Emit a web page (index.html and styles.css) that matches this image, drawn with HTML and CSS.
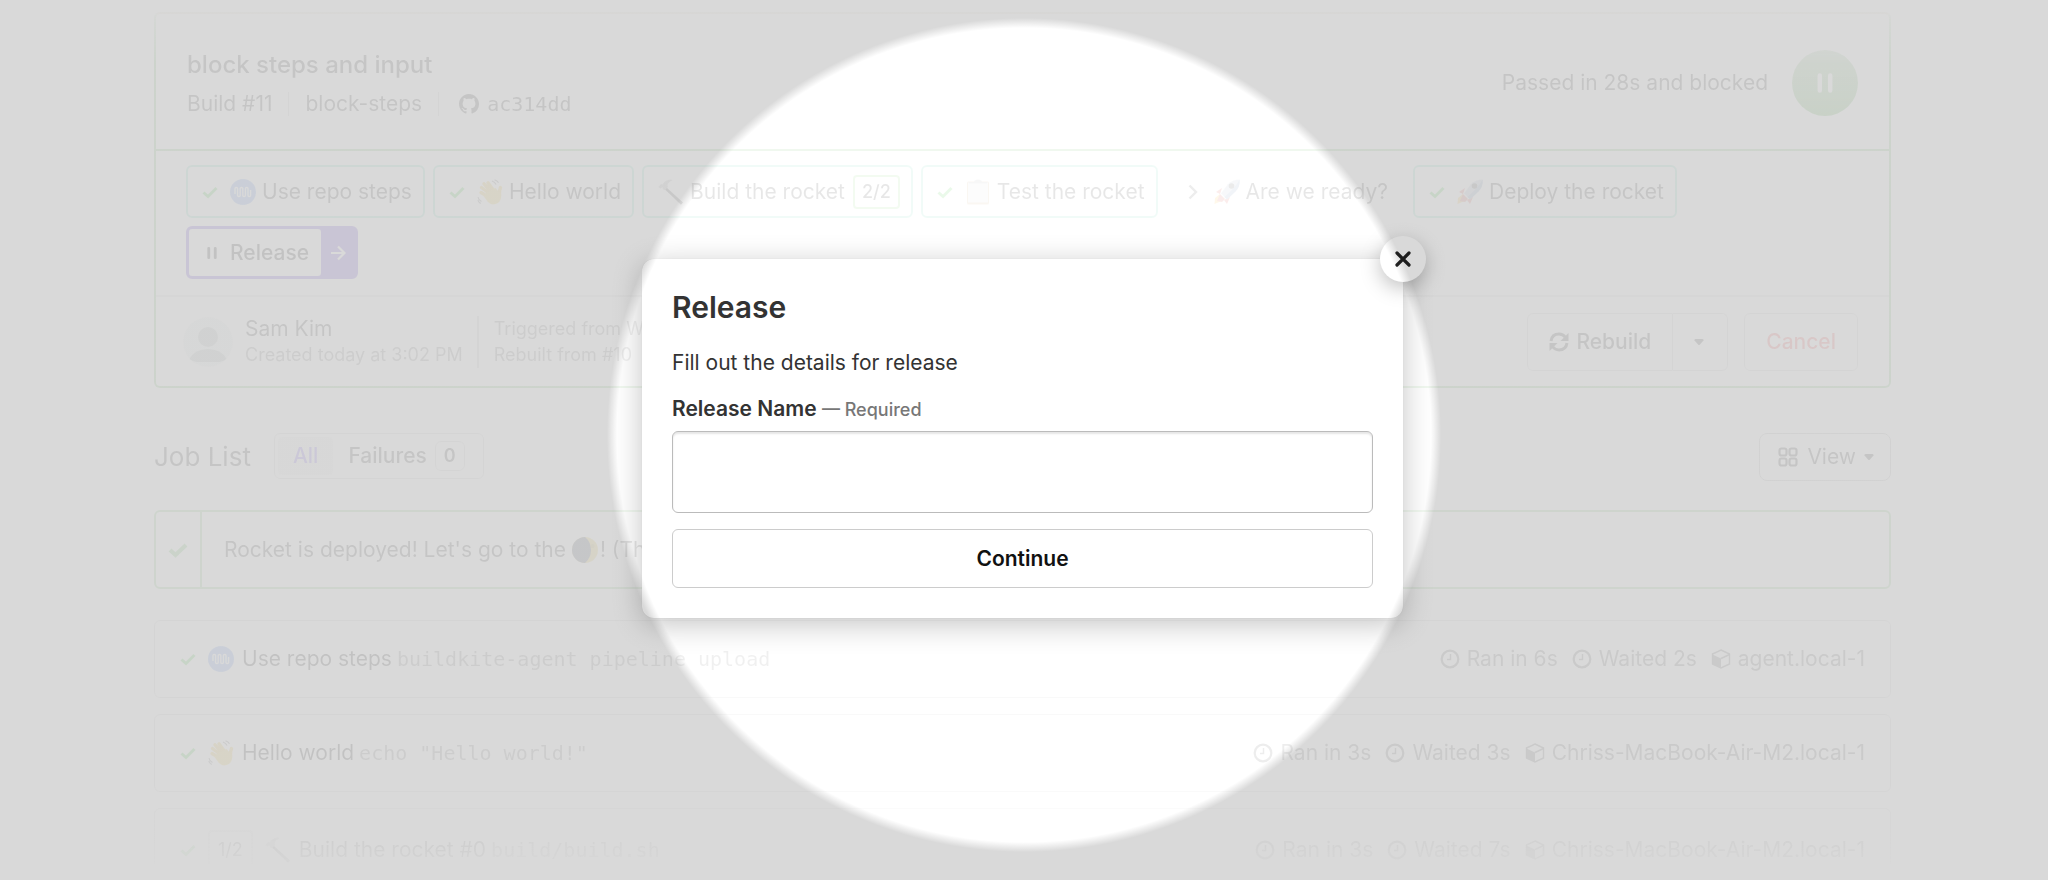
FILE: index.html
```html
<!DOCTYPE html>
<html lang="en">
<head>
<meta charset="utf-8">
<title>block steps and input – Build #11</title>
<link rel="stylesheet" href="styles.css">
</head>
<body>
<svg class="sprite" aria-hidden="true">
  <symbol id="check" viewBox="0 0 16 16"><path d="M1.500 8.500l4.500 4L14.500 4" fill="none" stroke="currentColor" stroke-width="3"/></symbol>
  <symbol id="logo" viewBox="0 0 26 26"><circle cx="13" cy="13" r="13" fill="#5a8cf0"/><path d="M5 15V9.500q0-1 1.300-1t1.300 1v7q0 1 1.300 1t1.300-1v-7q0-1 1.300-1t1.300 1v7q0 1 1.300 1t1.300-1v-7q0-1 1.300-1t1.300 1v7q0 1 1.300 1t1.300-1V11" fill="none" stroke="#fff" stroke-width="1.400"/></symbol>
  <symbol id="wave" viewBox="0 0 26 26"><g fill="none" stroke="#efbe30" stroke-linecap="round" stroke-width="3.400"><path d="M13 15L4.500 8.500M14.500 13L7 4.800M17 12L11 3.800M11.500 18L4 13.500"/><path d="M22.500 16q-.5-4 1-7.500"/></g><path d="M9.500 13.500L18.500 9l5.700 6.500q.5 5-3.200 8.500-6 3.500-10.500-1.500L6.500 17z" fill="#f5c93a"/><path d="M15 2q3 1 4 3.500M17.500.8q3 1 4 3M1 18q.5 3 3.500 4.500M.8 21q1 2.500 3 3.500" fill="none" stroke="#666" stroke-width="1.100"/></symbol>
  <symbol id="hammer" viewBox="0 0 26 26"><path d="M8.500 8.500L25 23.500l-2 2.200L7 10.500z" fill="#444"/><path d="M.5 8L3 5l1.500.5Q7 1 13 .5l1.500 1Q10 3 9.500 6l.5 2-3 3-2-.5-.5-2.500-2 1.500z" fill="#aaa"/></symbol>
  <symbol id="clip" viewBox="0 0 26 26"><rect x="2" y="2.500" width="22" height="23" rx="1.500" fill="#d9b48c"/><rect x="3" y="3.500" width="20" height="20" fill="#e4e4e8"/><path d="M4 4.500V3h5q0-2.500 4-2.500T17 3h5v1.500z" fill="#bbb"/></symbol>
  <symbol id="rocket" viewBox="0 0 26 26"><path d="M6 15L1 19l-.5 6 7-3z" fill="#ffc540"/><path d="M8 9l-6 4 4 2zM16 18l-3 7-3-4z" fill="#e2564b"/><path d="M6 15l5 5-3 3-5-1z" fill="#e2564b"/><path d="M25.500.5q1 7-4 12l-8.500 8-6-6 6.500-9q5-5 12-5z" fill="#b9c6d8"/><path d="M25.500.5q-3 7-15 17.500l2.500 2.500 8.500-8q5-5 4-12z" fill="#7f98c5"/><circle cx="17.500" cy="7" r="2.800" fill="#444"/></symbol>
  <symbol id="moon" viewBox="0 0 26 26"><circle cx="13" cy="13" r="13" fill="#e0c040"/><path d="M13 0a13 13 0 1 0 0 26q6-5 6-13t-6-13z" fill="#2b3345"/><circle cx="20.500" cy="9" r="2" fill="#b89a20"/></symbol>
  <symbol id="clock" viewBox="0 0 20 20"><circle cx="10" cy="10" r="8.300" fill="none" stroke="currentColor" stroke-width="2.200"/><path d="M10.500 5v5.500H7" fill="none" stroke="currentColor" stroke-width="1.500"/></symbol>
  <symbol id="cube" viewBox="0 0 20 20"><path d="M10 1l8.500 4v10L10 19 1.500 15V5z" fill="none" stroke="currentColor" stroke-width="1.500"/><path d="M1.500 5.500L10 9.500V19L1.500 15z" fill="currentColor"/><path d="M10 9.500l8.500-4" stroke="currentColor" stroke-width="1.500"/></symbol>
  <symbol id="caret" viewBox="0 0 10 8"><path d="M1.500 1h7Q10 1 9.500 2.500L6 6.500q-1 1-2 0L.5 2.500Q0 1 1.500 1z" fill="currentColor"/></symbol>
  <symbol id="pause" viewBox="0 0 16 20"><path d="M2.800 2.500v15M13.200 2.500v15" stroke="currentColor" stroke-width="4.500" stroke-linecap="round"/></symbol>
</svg>

<main class="page">
  <section class="build">
    <header class="build-head">
      <div>
        <h1 class="build-title">block steps and input</h1>
        <div class="meta">
          <span>Build #11</span><span>block-steps</span>
          <a class="commit" href="#commit"><svg class="icon" viewBox="0 0 16 16"><path fill="currentColor" d="M8 0C3.580 0 0 3.580 0 8c0 3.540 2.290 6.530 5.470 7.590.4.070.55-.17.55-.38 0-.19-.01-.82-.01-1.490-2.010.37-2.530-.49-2.690-.94-.09-.23-.48-.94-.82-1.130-.28-.15-.68-.52-.01-.53.63-.01 1.080.58 1.230.82.72 1.210 1.870.87 2.330.66.070-.52.28-.87.51-1.070-1.780-.2-3.640-.89-3.640-3.950 0-.87.31-1.590.82-2.150-.08-.2-.36-1.020.080-2.120 0 0 .67-.21 2.200.82.64-.18 1.320-.27 2-.27s1.360.090 2 .27c1.530-1.040 2.200-.82 2.200-.82.44 1.100.16 1.920.080 2.120.51.56.82 1.270.82 2.150 0 3.070-1.870 3.750-3.650 3.950.29.25.54.73.54 1.480 0 1.070-.01 1.930-.01 2.200 0 .21.15.46.55.38A8.010 8.010 0 0 0 16 8c0-4.420-3.580-8-8-8z"/></svg><code>ac314dd</code></a>
        </div>
      </div>
      <div class="status"><span>Passed in 28s and blocked</span><span class="status-dot"><svg width="16" height="20"><use href="#pause"/></svg></span></div>
    </header>

    <div class="steps">
      <a class="step" href="#s1"><svg class="tick"><use href="#check"/></svg><svg class="emoji"><use href="#logo"/></svg>Use repo steps</a>
      <a class="step" href="#s2"><svg class="tick"><use href="#check"/></svg><svg class="emoji"><use href="#wave"/></svg>Hello world</a>
      <a class="step" href="#s3"><svg class="emoji"><use href="#hammer"/></svg>Build the rocket<span class="count">2/2</span></a>
      <a class="step" href="#s4"><svg class="tick"><use href="#check"/></svg><svg class="emoji"><use href="#clip"/></svg>Test the rocket</a>
      <a class="step step-plain" href="#s5"><svg class="chevron" viewBox="0 0 10 16"><path d="M1.500 1.500L8 8l-6.500 6.500" fill="none" stroke="currentColor" stroke-width="2.400"/></svg><svg class="emoji"><use href="#rocket"/></svg>Are we ready?</a>
      <a class="step" href="#s6"><svg class="tick"><use href="#check"/></svg><svg class="emoji"><use href="#rocket"/></svg>Deploy the rocket</a>
      <button class="release" type="button"><span class="release-label"><svg class="pause"><use href="#pause"/></svg>Release</span><span class="release-go"><svg width="16" height="16" viewBox="0 0 16 16"><path d="M1 8h13M8 1.500L14.500 8 8 14.500" fill="none" stroke="#fff" stroke-width="2.200"/></svg></span></button>
    </div>

    <footer class="build-foot">
      <svg class="avatar" viewBox="0 0 50 50"><circle cx="25" cy="25" r="25" fill="#eceeee"/><circle cx="25" cy="20" r="10" fill="#a3b3b0"/><path d="M6.500 42q5-10 18.500-10t18.500 10q-4 3-7 3h-23q-3 0-7-3z" fill="#a3b3b0"/></svg>
      <div class="author"><span class="name">Sam Kim</span><span class="sub">Created today at 3:02 PM</span></div>
      <div class="source"><span class="sub">Triggered from Web</span><span class="sub">Rebuilt from #10</span></div>
      <div class="actions">
        <div class="split">
          <button class="btn" type="button"><svg class="icon" viewBox="0 0 20 20"><path d="M2 9q1-7 8-7 4 0 6.500 3.500M18 11q-1 7-8 7-4 0-6.500-3.500" fill="none" stroke="currentColor" stroke-width="3"/><path d="M19.500 1v8h-8zM.5 19v-8h8z" fill="currentColor"/></svg>Rebuild</button>
          <button class="btn btn-caret" type="button" aria-label="More rebuild options"><svg class="caret"><use href="#caret"/></svg></button>
        </div>
        <button class="btn btn-danger" type="button">Cancel</button>
      </div>
    </footer>
  </section>

  <div class="list-head">
    <h2 class="list-title">Job List</h2>
    <div class="toggle">
      <button class="tab tab-on" type="button">All</button>
      <button class="tab" type="button">Failures<span class="zero">0</span></button>
    </div>
    <button class="view" type="button"><svg class="icon" viewBox="0 0 20 20" fill="none" stroke="currentColor" stroke-width="2.200"><rect x="1.500" y="1.500" width="7" height="7" rx="2"/><rect x="11.500" y="1.500" width="7" height="7" rx="2"/><rect x="1.500" y="11.500" width="7" height="7" rx="2"/><rect x="11.500" y="11.500" width="7" height="7" rx="2"/></svg>View<svg class="caret"><use href="#caret"/></svg></button>
  </div>

  <div class="note">
    <span class="note-side"><svg width="20" height="16" viewBox="0 0 20 16"><path d="M2 8l5.500 5L18 3" fill="none" stroke="currentColor" stroke-width="4.200"/></svg></span>
    <p class="note-text">Rocket is deployed! Let's go to the <svg class="emoji moon"><use href="#moon"/></svg>! (Thanks)</p>
  </div>

  <ul class="jobs">
    <li class="job"><svg class="tick"><use href="#check"/></svg><svg class="emoji"><use href="#logo"/></svg><a class="job-name" href="#j1">Use repo steps</a><code>buildkite-agent pipeline upload</code>
      <div class="facts"><span><svg class="icon"><use href="#clock"/></svg>Ran in 6s</span><span><svg class="icon"><use href="#clock"/></svg>Waited 2s</span><span><svg class="icon"><use href="#cube"/></svg>agent.local-1</span></div></li>
    <li class="job"><svg class="tick"><use href="#check"/></svg><svg class="emoji"><use href="#wave"/></svg><a class="job-name" href="#j2">Hello world</a><code>echo "Hello world!"</code>
      <div class="facts"><span><svg class="icon"><use href="#clock"/></svg>Ran in 3s</span><span><svg class="icon"><use href="#clock"/></svg>Waited 3s</span><span><svg class="icon"><use href="#cube"/></svg>Chriss-MacBook-Air-M2.local-1</span></div></li>
    <li class="job job-tall"><svg class="tick"><use href="#check"/></svg><span class="index">1/2</span><svg class="emoji"><use href="#hammer"/></svg><a class="job-name" href="#j3">Build the rocket #0</a><code>build/build.sh</code>
      <div class="facts"><span><svg class="icon"><use href="#clock"/></svg>Ran in 3s</span><span><svg class="icon"><use href="#clock"/></svg>Waited 7s</span><span><svg class="icon"><use href="#cube"/></svg>Chriss-MacBook-Air-M2.local-1</span></div></li>
  </ul>
</main>

<div class="backdrop">
  <form class="modal" role="dialog" aria-labelledby="dlg-title">
    <button class="close" type="button" aria-label="Close"><svg width="16" height="16" viewBox="0 0 16 16"><path d="M2 2l12 12M14 2L2 14" stroke="#222" stroke-width="3.200" stroke-linecap="round"/></svg></button>
    <h2 class="modal-title" id="dlg-title">Release</h2>
    <p class="modal-text">Fill out the details for release</p>
    <label class="modal-label" for="release-name">Release Name <span class="required">— Required</span></label>
    <input class="modal-input" id="release-name" type="text" required>
    <button class="modal-submit" type="button">Continue</button>
  </form>
</div>
<div class="spotlight"></div>
</body>
</html>
```
FILE: styles.css
```css
* { box-sizing: border-box; }
body {
  margin: 0;
  height: 100vh;
  overflow: hidden;
  background: #fff;
  color: #222;
  font: 21px/24px Inter, "Liberation Sans", sans-serif;
}
h1, h2, p, ul { margin: 0; padding: 0; font-weight: 400; }
button { font: inherit; color: inherit; background: none; border: 0; padding: 0; }
a { color: inherit; text-decoration: none; }
code { font: 20px/24px "DejaVu Sans Mono", monospace; }
svg { flex: none; }
.sprite { position: absolute; width: 0; height: 0; }

.page {
  height: 100vh;
  overflow: hidden;
  padding: 12px 157px 0 154px;
  opacity: 0.1;
  -webkit-mask-image: linear-gradient(transparent 11px, rgba(0,0,0,.3) 12px, #000 60px, #000 calc(100% - 90px), rgba(0,0,0,.25) calc(100% - 17px), transparent calc(100% - 16px));
  mask-image: linear-gradient(transparent 11px, rgba(0,0,0,.3) 12px, #000 60px, #000 calc(100% - 90px), rgba(0,0,0,.25) calc(100% - 17px), transparent calc(100% - 16px));
}
.icon { width: 20px; height: 20px; }
.emoji { width: 26px; height: 26px; }
.tick { width: 16px; height: 16px; color: #40c838; }
.caret { width: 10px; height: 8px; }

.build { border: 2px solid #78c470; border-top-color: #b0a860; border-radius: 6px; }
.build-head {
  display: flex;
  justify-content: space-between;
  align-items: center;
  height: 137px;
  padding: 2px 31px 0;
  border-bottom: 2px solid #78c470;
}
.build-title { font-size: 24px; line-height: 30px; font-weight: 500; margin-bottom: 12px; }
.meta { display: flex; align-items: center; }
.meta > * + * { margin-left: 16px; padding-left: 16px; border-left: 1px solid #ccc; }
.meta .commit { display: flex; align-items: center; gap: 8px; padding-left: 20px; }
.status { display: flex; align-items: center; gap: 24px; }
.status-dot {
  display: grid;
  place-items: center;
  width: 66px;
  height: 66px;
  border-radius: 50%;
  color: #fff;
  background: linear-gradient(#9cc795, #4bad3c);
}

.steps { display: flex; flex-wrap: wrap; gap: 8px; padding: 14px 150px 16px 30px; }
.step {
  display: flex;
  align-items: center;
  height: 53px;
  padding: 0 11px 0 14px;
  border: 2px solid #82e0c2;
  border-radius: 6px;
}
.step .tick { margin-right: 12px; }
.step .emoji { margin-right: 6px; }
.step-plain { border-color: transparent; padding: 0 15px 0 20px; }
.chevron { width: 10px; height: 16px; margin-right: 16px; color: #555; }
.count {
  margin-left: 8px;
  padding: 3px 7px;
  border: 2px solid #90dc82;
  border-radius: 4px;
  font-size: 18px;
  font-weight: 500;
}
.release {
  display: flex;
  height: 53px;
  border: 3px solid #5424d0;
  border-radius: 6px;
  background: #5424d0;
  color: #000;
  font-weight: 500;
}
.release-label {
  display: flex;
  align-items: center;
  gap: 13px;
  height: 100%;
  padding: 0 12px 0 18px;
  border-radius: 3px;
  background: #fff;
}
.pause { width: 10px; height: 14px; }
.release-go { display: grid; place-items: center; width: 34px; height: 100%; }

.build-foot {
  display: flex;
  align-items: center;
  height: 91px;
  padding: 0 31px 0 27px;
  border-top: 2px solid #ddd;
}
.avatar { width: 50px; height: 50px; margin-right: 12px; }
.author, .source { display: flex; flex-direction: column; }
.sub { font-size: 18px; line-height: 26px; color: #777; }
.name { line-height: 26px; }
.source { margin-left: 14px; padding-left: 15px; border-left: 2px solid #ccc; }
.actions { display: flex; gap: 16px; margin-left: auto; }
.split { display: flex; }
.btn {
  display: flex;
  align-items: center;
  gap: 7px;
  height: 58px;
  padding: 0 21px;
  border: 1px solid #ccc;
  border-radius: 6px;
  font-weight: 500;
}
.split .btn:first-child { border-radius: 6px 0 0 6px; }
.btn-caret { width: 55px; border-left: 0; border-radius: 0 6px 6px 0; }
.btn-danger { color: #f84040; }

.list-head { display: flex; align-items: flex-start; height: 122px; padding-top: 45px; }
.list-title { font-size: 26px; line-height: 48px; }
.toggle {
  display: flex;
  align-items: center;
  height: 46px;
  margin-left: 23px;
  padding: 3px;
  border: 1px solid #ccc;
  border-radius: 6px;
}
.tab { display: flex; align-items: center; gap: 8px; height: 38px; padding: 0 15px; border-radius: 4px; font-weight: 500; }
.tab-on { background: #f4f4f4; color: #6a45f5; }
.zero { padding: 2px 8px; border: 1px solid #ccc; border-radius: 6px; font-size: 18px; font-weight: 600; }
.view {
  display: flex;
  align-items: center;
  height: 48px;
  margin-left: auto;
  padding: 0 16px 0 18px;
  border: 1px solid #aaa;
  border-radius: 8px;
}
.view .icon { margin-right: 9px; }
.view .caret { margin-left: 8px; }

.note { display: flex; height: 79px; border: 2px solid #86cc80; border-radius: 6px; }
.note-side { display: grid; place-items: center; width: 46px; border-right: 2px solid #86cc80; color: #60c056; }
.note-text { display: flex; align-items: center; padding-left: 22px; white-space: pre; }
.moon { margin: 0 2px 0 0; }

.jobs { list-style: none; padding-top: 31px; display: grid; gap: 16px; }
.job {
  display: flex;
  align-items: center;
  height: 78px;
  padding: 0 25px;
  border: 1px solid #ccc;
  border-radius: 6px;
}
.job-tall { height: 84px; }
.job .tick { margin-right: 12px; }
.job .emoji { margin-right: 8px; }
.job-name { color: #000; margin-right: 5px; }
.job code { color: #777; }
.index { margin-right: 12px; padding: 6px 8px; border: 2px solid #ddd; border-radius: 4px; font-size: 18px; }
.facts { display: flex; gap: 14px; margin-left: auto; color: #555; }
.facts span { display: flex; align-items: center; gap: 7px; }

.backdrop {
  position: absolute;
  inset: 0;
  display: grid;
  place-items: center;
  padding: 0 3px 3px 0;
}
.modal {
  position: relative;
  width: 761px;
  max-width: 100%;
  padding: 30px;
  border-radius: 12px;
  background: #fff;
  color: #333;
  box-shadow: 0 0 1px rgba(0,0,0,.12), 0 6px 30px rgba(0,0,0,.24);
}
.close {
  position: absolute;
  top: -23px;
  right: -23px;
  display: grid;
  place-items: center;
  width: 46px;
  height: 46px;
  border-radius: 50%;
  background: #fff;
  box-shadow: 0 6px 20px rgba(0,0,0,.25);
}
.modal-title { font-size: 30px; line-height: 36px; font-weight: 600; }
.modal-text { margin: 26px 0 22px; }
.modal-label { display: block; margin-bottom: 9px; font-weight: 600; }
.required { color: #777; font-size: 18px; font-weight: 500; }
.modal-input {
  display: block;
  width: 100%;
  height: 82px;
  margin-bottom: 16px;
  padding: 0 16px;
  border: 1px solid #bbb;
  border-radius: 6px;
  background: #fff;
  font: inherit;
  box-shadow: inset 0 2px 2px rgba(0,0,0,.1);
}
.modal-submit {
  display: block;
  width: 100%;
  height: 59px;
  border: 1px solid #ccc;
  border-radius: 6px;
  color: #111;
  font-weight: 600;
}
.spotlight {
  position: absolute;
  inset: 0;
  pointer-events: none;
  background: radial-gradient(circle at 50% 435px, transparent 407px, rgba(0,0,0,.15) 417px);
}
```
